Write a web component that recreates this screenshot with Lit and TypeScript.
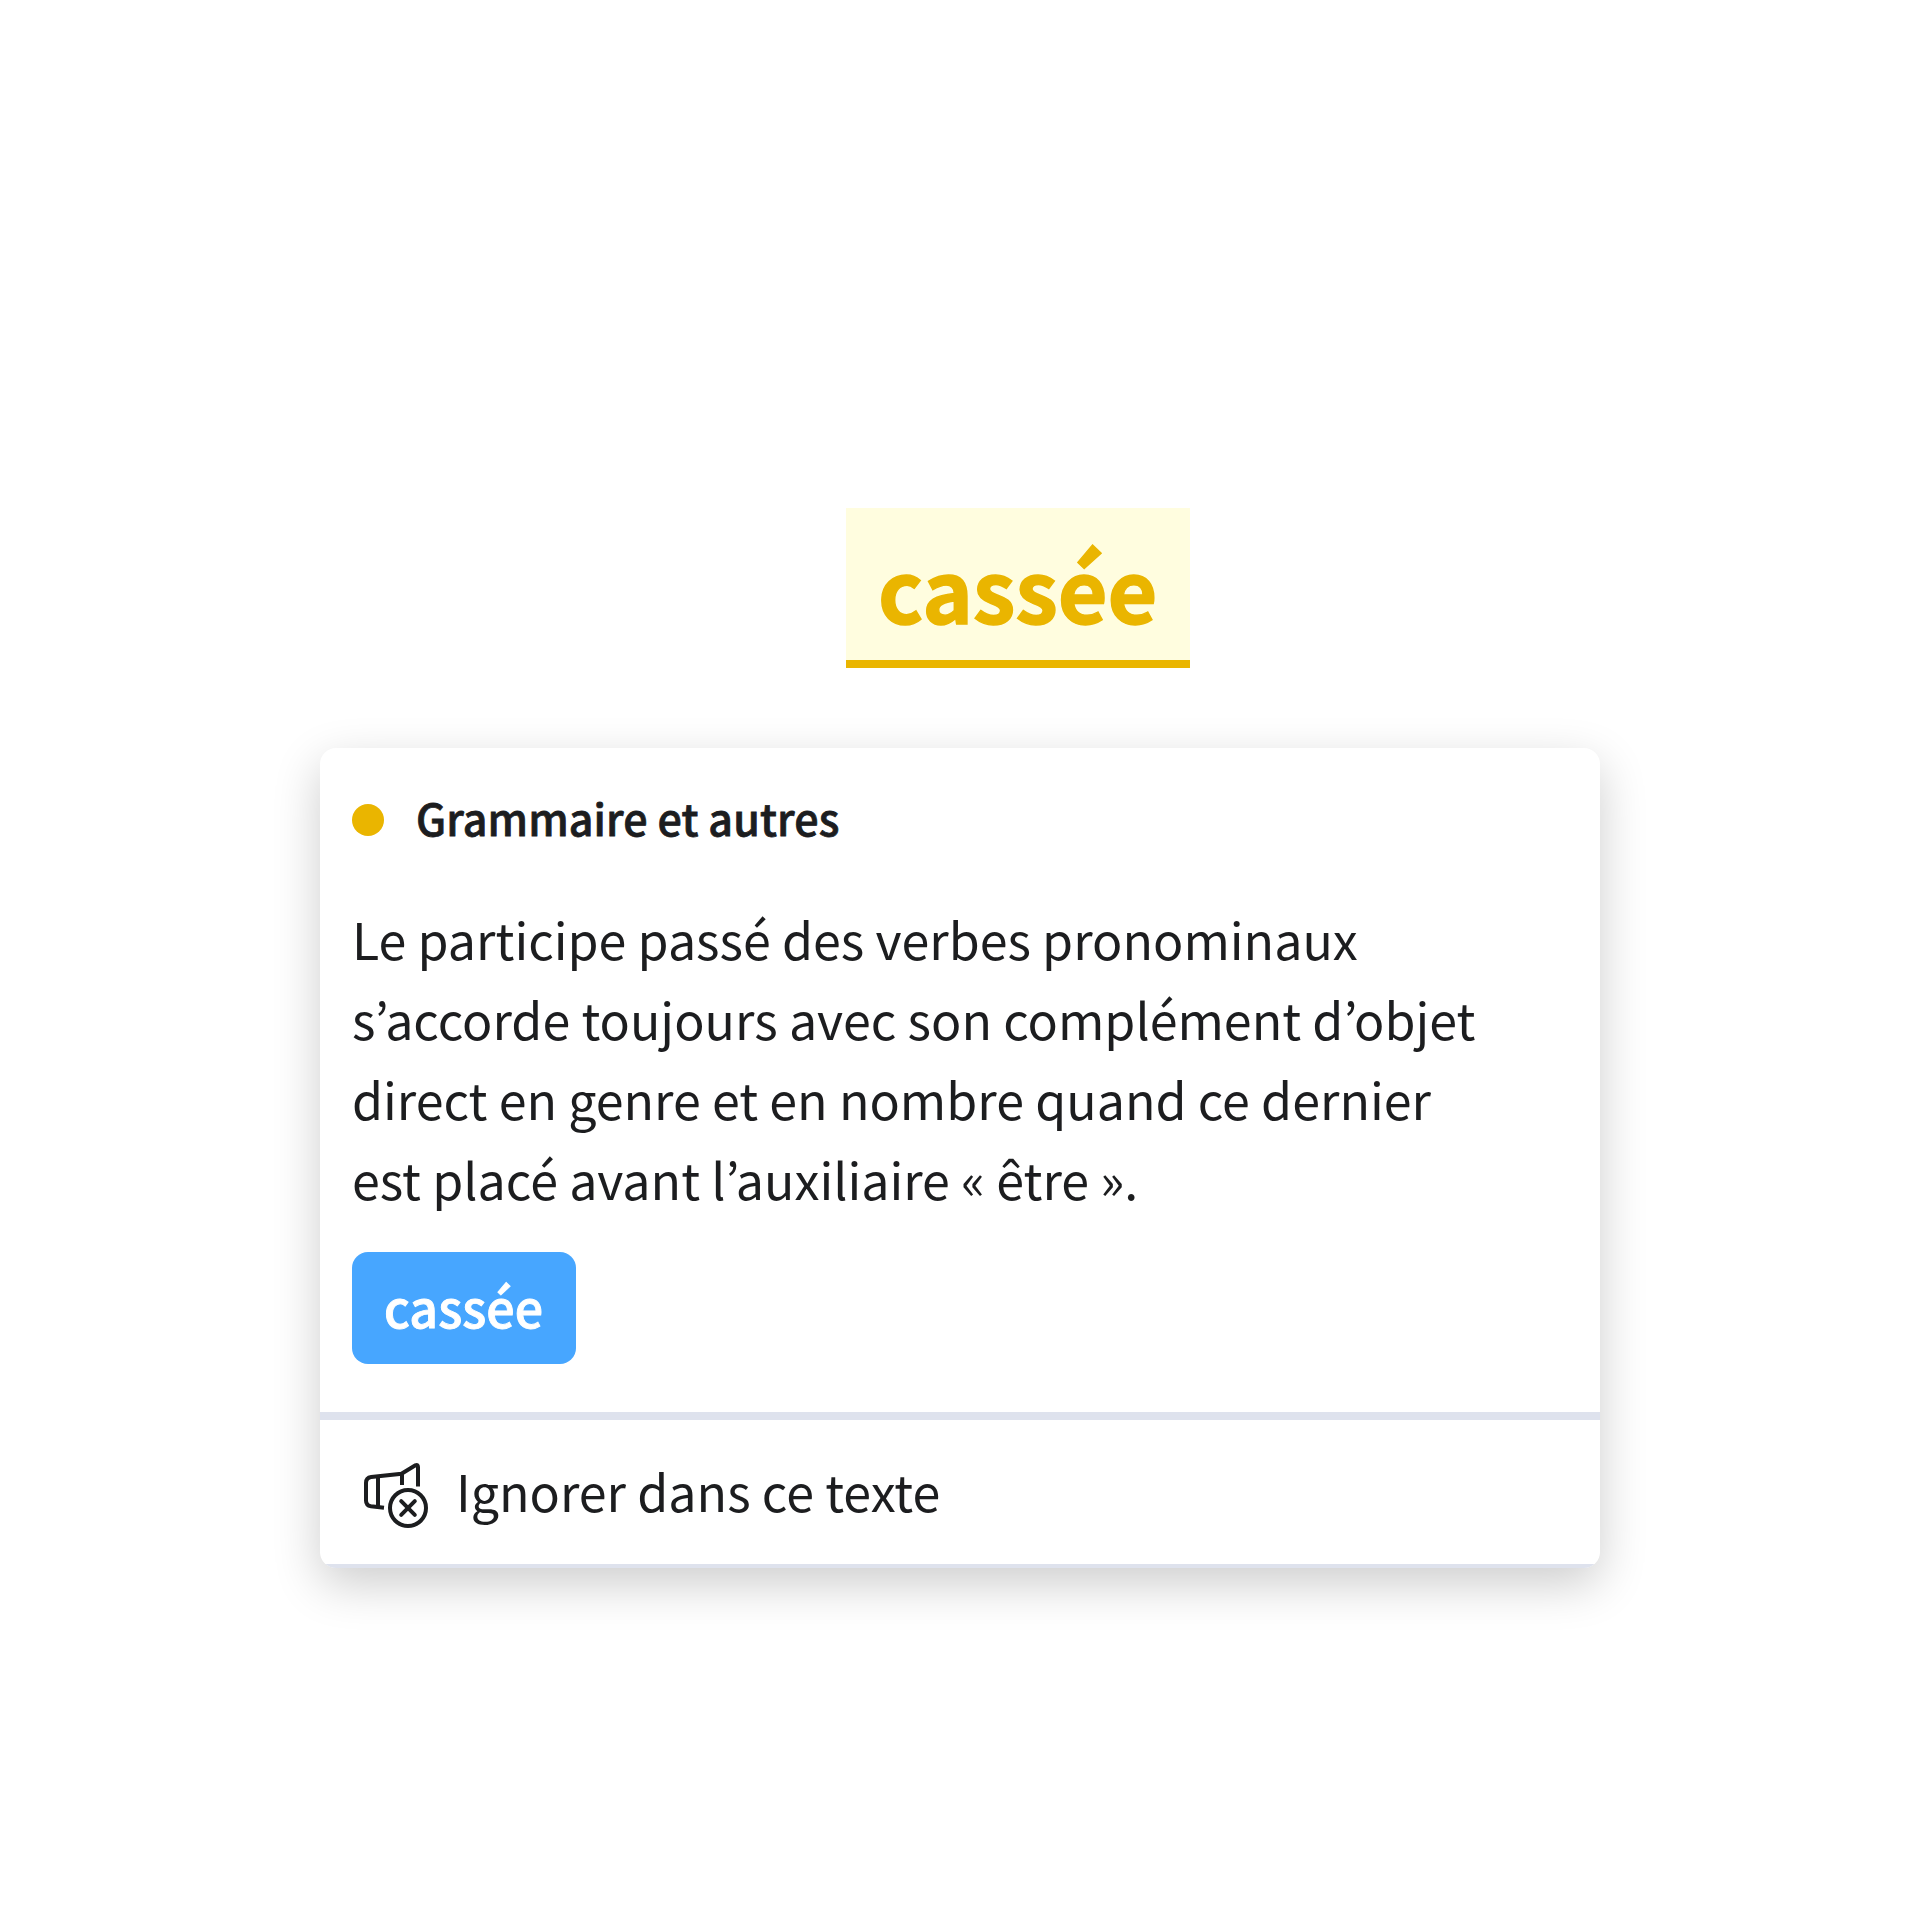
import { LitElement, html, css, svg } from "lit";
import { customElement, property } from "lit/decorators.js";

@customElement("ignore-icon")
class IgnoreIcon extends LitElement {
  static styles = css`
    :host { display: block; width: 80px; height: 80px; }
    svg { display: block; }
    .stroke { fill: none; stroke: #1c1d1f; stroke-width: 4; }
    .round { stroke-linecap: round; stroke-linejoin: round; }
  `;
  render() {
    return html`<svg width="80" height="80" viewBox="0 0 80 80">
      ${svg`
        <path class="stroke" d="M24 55.7 L11 54.3 Q6 53.5 6 48.5 V31 Q6 25.6 11.2 25 L41.5 21.8 L55.4 13.3 Q58 12 58 15 V34.5"/>
        <path class="stroke" d="M18 24.5 V55 M42 21.8 V33"/>
        <circle class="stroke" cx="48" cy="56" r="18"/>
        <path class="stroke round" d="M41.2 49.2 L54.8 62.8 M54.8 49.2 L41.2 62.8"/>
      `}
    </svg>`;
  }
}

@customElement("correction-card")
class CorrectionCard extends LitElement {
  @property() category = "";
  @property() message = "";
  @property() suggestion = "";
  @property() action = "";

  static styles = css`
    :host {
      display: flex;
      flex-direction: column;
      box-sizing: border-box;
      width: 1280px;
      height: 820px;
      border-radius: 16px;
      overflow: hidden;
      background: #fff;
      color: #1c1d1f;
      box-shadow: 0 16px 48px rgba(0, 0, 0, 0.2);
    }
    .body {
      box-sizing: border-box;
      height: 664px;
      padding: 37px 32px 0;
      display: flex;
      flex-direction: column;
      align-items: flex-start;
    }
    .heading { display: flex; align-items: center; gap: 32px; height: 70px; }
    .dot { width: 32px; height: 32px; border-radius: 50%; background: #eab500; }
    .title {
      font-size: 42.97px;
      font-weight: 500;
      line-height: 64px;
      letter-spacing: 0.11px;
      -webkit-text-stroke: 0.8px currentColor;
      padding-bottom: 6px;
      white-space: nowrap;
    }
    .message {
      margin: 43px 0 34px;
      width: 1140px;
      font-size: 50.13px;
      line-height: 80px;
    }
    .suggestion {
      box-sizing: border-box;
      width: 224px;
      height: 112px;
      padding: 14px 0 0 32px;
      border-radius: 16px;
      background: #47a6ff;
      color: #fff;
      font-size: 50.13px;
      font-weight: 500;
      line-height: 80px;
      -webkit-text-stroke: 0.9px currentColor;
    }
    .footer {
      display: flex;
      align-items: center;
      gap: 16px;
      height: 144px;
      padding-left: 40px;
      border-top: 8px solid #dee2ed;
      border-bottom: 4px solid #dee2ed;
    }
    .action { font-size: 50.13px; line-height: 80px; padding-bottom: 4px; }
  `;
  render() {
    return html`
      <div class="body">
        <div class="heading">
          <span class="dot"></span>
          <span class="title">${this.category}</span>
        </div>
        <p class="message">${this.message}</p>
        <div class="suggestion">${this.suggestion}</div>
      </div>
      <div class="footer">
        <ignore-icon></ignore-icon>
        <span class="action">${this.action}</span>
      </div>
    `;
  }
}

@customElement("app-root")
class AppRoot extends LitElement {
  static styles = css`
    :host {
      display: flex;
      flex-direction: column;
      align-items: center;
      box-sizing: border-box;
      width: 1920px;
      height: 1920px;
      padding-top: 508px;
      background: #fff;
      font-family: "Noto Sans CJK KR", "Noto Sans", sans-serif;
    }
    .word {
      box-sizing: border-box;
      width: 344px;
      height: 160px;
      margin: 0 0 80px 116px;
      padding-left: 32px;
      border-bottom: 8px solid #eab500;
      background: #fffddf;
      color: #eab500;
      font-size: 85.94px;
      font-weight: 700;
      line-height: 157px;
      letter-spacing: -0.1px;
      -webkit-text-stroke: 1.4px currentColor;
    }
  `;
  render() {
    return html`
      <div class="word">cassée</div>
      <correction-card
        category="Grammaire et autres"
        message=${"Le participe passé des verbes pronominaux s’accorde toujours avec son complément d’objet direct en genre et en nombre quand ce dernier est placé avant l’auxiliaire «\u00a0être\u00a0»."}
        suggestion="cassée"
        action="Ignorer dans ce texte"
      ></correction-card>
    `;
  }
}
